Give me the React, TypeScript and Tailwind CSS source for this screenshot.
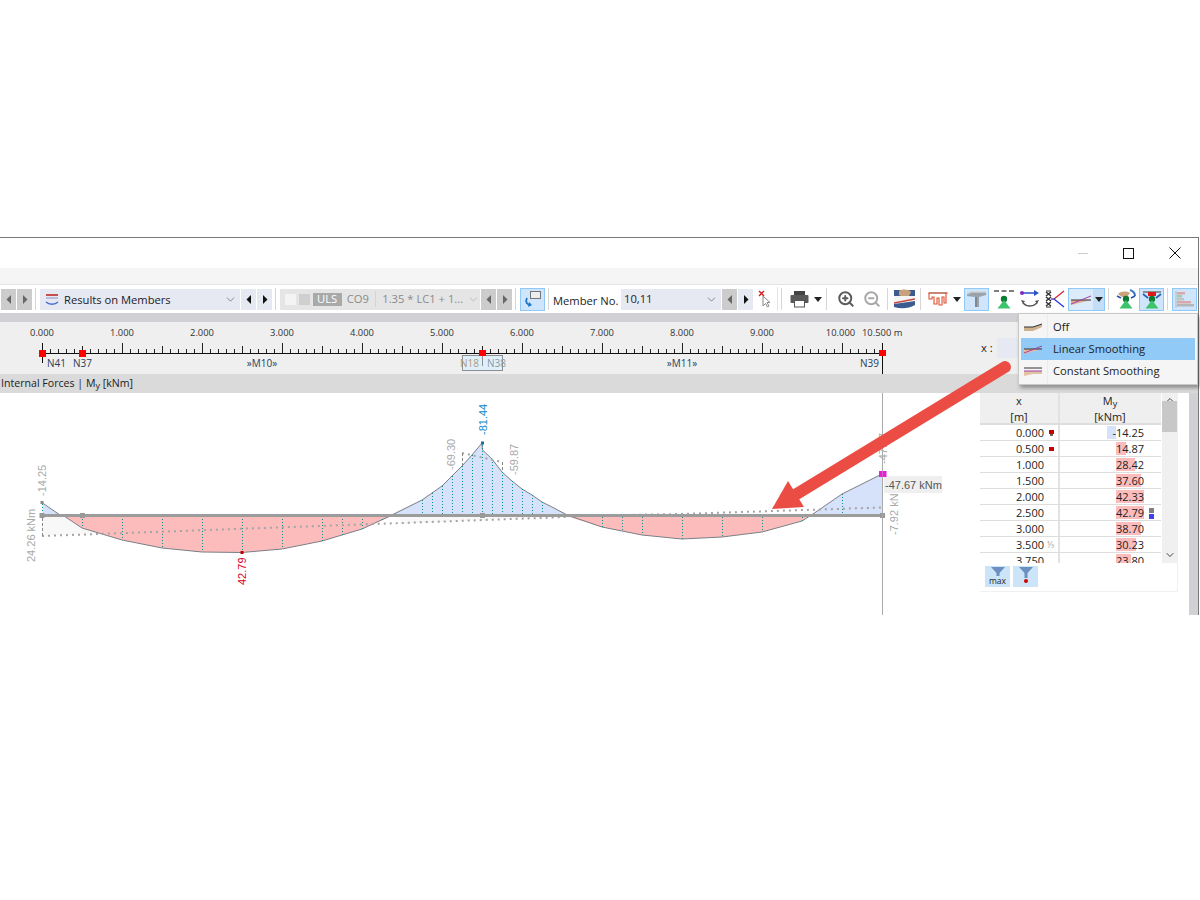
import { ChevronDown, ZoomIn, ZoomOut, ChevronUp } from "lucide-react";

const uiFont = { fontFamily: '"Open Sans", "Noto Sans", sans-serif' };

function Sep() {
    return <div className="ml-[3px] mr-[4px] h-[22px] w-px shrink-0 bg-[#d6d6d6]" />;
}

function Arrow({ dir, dark, className }: { dir: "l" | "r"; dark?: boolean; className: string }) {
    return (
        <div className={"flex h-[21px] w-[15px] shrink-0 items-center justify-center " + className}>
            <svg width="6" height="9" viewBox="0 0 6 9">
                <path d={dir === "l" ? "M5 0v9L0.5 4.5z" : "M1 0v9l4.5-4.5z"} fill={dark ? "#111" : "#666"} />
            </svg>
        </div>
    );
}

function ToolBtn({ w = 25, on, children, className = "" }: { w?: number; on?: boolean; children: React.ReactNode; className?: string }) {
    return (
        <div
            style={{ width: w }}
            className={
                "flex h-[23px] shrink-0 items-center justify-center " +
                (on ? "border border-[#90c8f6] bg-[#cfe5fb] " : "") +
                className
            }
        >
            {children}
        </div>
    );
}

function Caret() {
    return (
        <svg width="8" height="5" viewBox="0 0 8 5" className="shrink-0">
            <path d="M0 0h8L4 5z" fill="#222" />
        </svg>
    );
}

function SmoothIcon({ mode }: { mode: "off" | "linear" | "constant" }) {
    return (
        <svg width="18" height="12" viewBox="0 0 18 12">
            {mode === "off" && <path d="M0 6h9l9-3v3L9 10H0z" fill="#cdb38f" />}
            {mode === "off" && <path d="M0 6h9l9-3" stroke="#333" fill="none" />}
            {mode === "linear" && <path d="M0 6h18L0 11z" fill="#e9b9a0" />}
            {mode === "linear" && <path d="M0 6h18" stroke="#333" fill="none" />}
            {mode === "linear" && <path d="M0 10L18 3" stroke="#a13fa8" fill="none" />}
            {mode === "constant" && <path d="M0 6h18v3H9L0 11z" fill="#e3c3a5" />}
            {mode === "constant" && <path d="M0 3h18" stroke="#333" fill="none" />}
            {mode === "constant" && <path d="M0 6h18" stroke="#a13fa8" fill="none" />}
        </svg>
    );
}

function Support() {
    return (
        <g>
            <circle cx="10" cy="10" r="3.2" fill="#0e7a35" />
            <path d="M10 11L3.5 19.5h13z" fill="#3cc46a" />
        </g>
    );
}

function Toolbar() {
    return (
        <div className="flex h-[28px] items-center bg-white pl-px text-[11.2px] text-[#222]">
            <Arrow dir="l" className="bg-[#cccccc]" />
            <Arrow dir="r" className="ml-px bg-[#cccccc]" />
            <Sep />
            <div className="flex h-[21px] w-[200px] shrink-0 items-center bg-[#e6e8f2] pl-[5px] pr-[3px]">
                <svg width="14" height="12" viewBox="0 0 14 12" className="shrink-0">
                    <path d="M1 2h12" stroke="#c94f4f" strokeWidth="2" />
                    <path d="M1 5h12" stroke="#8b93c9" strokeWidth="1" />
                    <path d="M1 9c3 3 9 3 12 0" stroke="#4a6fd0" strokeWidth="1.5" fill="none" />
                </svg>
                <span className="ml-[5px] flex-1 translate-y-px">Results on Members</span>
                <ChevronDown size={13} strokeWidth={1.2} color="#555" />
            </div>
            <Arrow dir="l" dark className="ml-px bg-[#e6e8f2]" />
            <Arrow dir="r" dark className="ml-px bg-[#e6e8f2]" />
            <Sep />
            <div className="flex h-[21px] w-[200px] shrink-0 items-center bg-[#e5e5e5] pl-[5px] text-[#8a8a8a]">
                <div className="h-[11px] w-[11px] bg-[#f4f4f4]" />
                <div className="ml-[3px] h-[11px] w-[11px] bg-[#cfcfcf]" />
                <div className="ml-[3px] flex h-[13px] w-[30px] items-center justify-center bg-[#a9a9a9] text-white">ULS</div>
                <span className="ml-[5px] w-[24px]">CO9</span>
                <div className="ml-[5px] h-[16px] w-px bg-[#d4d4d4]" />
                <span className="ml-[6px] w-[80px] whitespace-nowrap">1.35 * LC1 + 1...</span>
                <ChevronDown size={13} strokeWidth={1.2} color="#aaa" className="ml-[5px]" />
            </div>
            <Arrow dir="l" className="ml-px bg-[#cccccc]" />
            <Arrow dir="r" className="ml-px bg-[#cccccc]" />
            <Sep />
            <ToolBtn on>
                <svg width="18" height="18" viewBox="0 0 18 18">
                    <rect x="6.5" y="1.5" width="10" height="7" fill="#eee" stroke="#777" />
                    <path d="M3 8c-2 4 0 7 4 7" stroke="#1e78c8" strokeWidth="1.8" fill="none" />
                    <path d="M5 12l3 3-4 2z" fill="#1e78c8" />
                </svg>
            </ToolBtn>
            <Sep />
            <span className="w-[68px] shrink-0 translate-y-[2px] whitespace-nowrap">Member No.</span>
            <div className="flex h-[21px] w-[100px] shrink-0 items-center bg-[#e6e8f2] pl-[3px] pr-[3px]">
                <span className="flex-1">10,11</span>
                <ChevronDown size={13} strokeWidth={1.2} color="#555" />
            </div>
            <Arrow dir="l" className="ml-px bg-[#cccccc]" />
            <Arrow dir="r" dark className="ml-px bg-[#e6e8f2]" />
            <div className="flex h-[24px] w-[25px] shrink-0 items-center justify-center border-r border-[#e4e4e4]">
                <svg width="16" height="18" viewBox="0 0 16 18">
                    <path d="M2 1l5 5M7 1L2 6" stroke="#d81b1b" strokeWidth="1.4" />
                    <path d="M6 6v10l2.5-2.5 2 3.5 1.5-1-2-3.5H13z" fill="#fff" stroke="#888" />
                </svg>
            </div>
            <Sep />
            <div className="flex h-[23px] w-[37px] shrink-0 items-center gap-[5px] pl-[4px]">
                <svg width="19" height="18" viewBox="0 0 19 18" className="shrink-0">
                    <path d="M4 1h11v4H4z" fill="#444" />
                    <rect x="0.5" y="5" width="18" height="8" rx="1" fill="#5a5a5a" />
                    <rect x="4.5" y="10.5" width="10" height="6.5" fill="#fff" stroke="#555" />
                </svg>
                <Caret />
            </div>
            <Sep />
            <div className="flex h-[23px] w-[53px] shrink-0 items-center gap-[8px] pl-[6px]">
                <ZoomIn size={18} strokeWidth={2.6} color="#5c5c5c" />
                <ZoomOut size={18} strokeWidth={2.6} color="#a8a8a8" />
            </div>
            <Sep />
            <ToolBtn w={26} className="-ml-px">
                <svg width="21" height="21" viewBox="0 0 21 21">
                    <path d="M0 1h21v6H0z" fill="#3c5c90" />
                    <path d="M5 2c4-2 9-2 12 1l-2 4-6 1-4-2z" fill="#c9a27b" />
                    <path d="M0 7h21v4L0 15z" fill="#f4f4f4" />
                    <path d="M0 14l21-4" stroke="#c9463d" strokeWidth="1.5" />
                    <path d="M0 15l21-3v4c-7 4-14 4-21 2z" fill="#3c5c90" />
                </svg>
            </ToolBtn>
            <Sep />
            <div className="flex h-[23px] w-[37px] shrink-0 items-center gap-[5px] pl-[3px]">
                <svg width="20" height="16" viewBox="0 0 20 16" className="shrink-0">
                    <path d="M0.5 2h19" stroke="#a5341c" strokeWidth="1.2" />
                    <path d="M1 2v6h3V6h2v7h3V7h2v7h3V6h2v6h2V2" stroke="#e0502c" strokeWidth="1.1" fill="none" />
                </svg>
                <Caret />
            </div>
            <ToolBtn on className="ml-[2px]">
                <svg width="21" height="17" viewBox="0 0 21 17">
                    <path d="M1 3l4-2h15v3l-7 2v10H9V6L1 5z" fill="#9aa3ab" />
                    <path d="M1 3l4-2h15" stroke="#ccd1d5" strokeWidth="1.5" fill="none" />
                    <path d="M9 6h2v10H9z" fill="#80898f" />
                </svg>
            </ToolBtn>
            <ToolBtn w={27} className="ml-px">
                <svg width="20" height="20" viewBox="0 0 20 20">
                    <path d="M0 2h5M7.5 2h5M15 2h5" stroke="#555" strokeWidth="1.6" />
                    <Support />
                </svg>
            </ToolBtn>
            <ToolBtn w={25}>
                <svg width="20" height="20" viewBox="0 0 20 20">
                    <circle cx="2" cy="4" r="2" fill="#7d2bc4" />
                    <path d="M3 4h14" stroke="#2a52c9" strokeWidth="1.5" />
                    <path d="M14 1l5 3-5 3z" fill="#2a52c9" />
                    <path d="M3 14c4 4 10 4 14 0" stroke="#555" strokeWidth="1.4" fill="none" />
                    <path d="M1 11l4 1-2 3zM19 11l-4 1 2 3z" fill="#555" />
                </svg>
            </ToolBtn>
            <ToolBtn w={25}>
                <svg width="20" height="20" viewBox="0 0 20 20">
                    <path d="M1 2h5M1 18h5" stroke="#333" strokeWidth="1" />
                    <path d="M1 3l5 4M6 3L1 7M1 8l5 4M6 8l-5 4M1 13l5 4M6 13l-5 4" stroke="#333" strokeWidth="1.5" />
                    <path d="M9 10L19 2" stroke="#d8232a" strokeWidth="1.3" />
                    <path d="M9 10l10 8" stroke="#2431dc" strokeWidth="1.3" />
                    <path d="M6 10h3" stroke="#2431dc" strokeWidth="1.3" />
                </svg>
            </ToolBtn>
            <div className="ml-px flex h-[23px] w-[37px] shrink-0 border border-[#90c8f6] bg-[#dcebf9]">
                <div className="flex w-[24px] items-center justify-center">
                    <svg width="20" height="12" viewBox="0 0 20 12">
                        <path d="M0 7h20L0 12z" fill="#e2ad95" />
                        <path d="M0 7h20" stroke="#333" fill="none" />
                        <path d="M0 11L20 3" stroke="#a13fa8" fill="none" />
                    </svg>
                </div>
                <div className="flex flex-1 items-center justify-center bg-[#c4def7]">
                    <Caret />
                </div>
            </div>
            <Sep />
            <ToolBtn w={25}>
                <svg width="20" height="20" viewBox="0 0 20 20">
                    <path d="M14 1c3 1 5 3 5 6" stroke="#3b78c8" strokeWidth="2" fill="none" />
                    <path d="M2 5c3-3 9-3 12-1l-3 4H6z" fill="#c9a27b" />
                    <path d="M1 7l4 2M19 7l-4 2" stroke="#2a52a9" strokeWidth="1.5" />
                    <Support />
                </svg>
            </ToolBtn>
            <ToolBtn on className="ml-px">
                <svg width="20" height="20" viewBox="0 0 20 20">
                    <path d="M1 3h18" stroke="#555" strokeWidth="1.2" />
                    <rect x="6" y="3" width="8" height="4" fill="#e01818" />
                    <path d="M1 5l5 4M19 5l-5 4" stroke="#2a62b9" strokeWidth="1.8" />
                    <Support />
                </svg>
            </ToolBtn>
            <Sep />
            <ToolBtn on>
                <svg width="20" height="19" viewBox="0 0 20 19">
                    <path d="M1 1v17" stroke="#b8b8b8" />
                    <rect x="2" y="2" width="8" height="2.5" fill="#dba8a8" />
                    <rect x="2" y="5" width="5" height="2.5" fill="#9bd0a9" />
                    <rect x="2" y="8" width="7" height="2.5" fill="#bfc4c8" />
                    <rect x="2" y="11" width="14" height="2.5" fill="#dba8a8" />
                    <rect x="2" y="14" width="17" height="2.5" fill="#b3b7ba" />
                </svg>
            </ToolBtn>
        </div>
    );
}

const members = Array.from({ length: 106 }, (_, i) => i);
const majors = [0, 1, 2, 3, 4, 5, 6, 7, 8, 9, 10];

function Ruler() {
    const px = (m: number) => 42.5 + 80 * m;
    return (
        <svg viewBox="0 0 980 52" className="block h-[52px] w-[980px] shrink-0" style={uiFont}>
            {members.map((i) => {
                const x = 42.5 + 8 * i;
                const h = i % 10 === 0 ? 10 : i % 5 === 0 ? 7 : 4;
                return <path key={i} d={`M${x} ${31 - h}V31`} stroke="#222" />;
            })}
            <path d="M42 31.5H882" stroke="#111" />
            <path d="M42.5 21V41" stroke="#111" />
            {majors.map((m) => (
                <text key={m} x={m === 10 ? px(m) - 2 : px(m) - 0.5} y="14" textAnchor="middle" fontSize="9.4" fill="#333">
                    {m.toFixed(3)}
                </text>
            ))}
            <text x="862" y="14" fontSize="9.4" fill="#333">10.500 m</text>
            <rect x="462.5" y="33.5" width="40" height="15" fill="#dff0fa" stroke="#8a8f92" />
            <text x="47" y="45" fontSize="10" fill="#2b3d5a">N41</text>
            <text x="73" y="45" fontSize="10" fill="#2b3d5a">N37</text>
            <text x="262" y="45" fontSize="10" textAnchor="middle" fill="#2b3d5a">»M10»</text>
            <text x="460" y="45" fontSize="10" fill="#b09a7a">N18</text>
            <text x="487" y="45" fontSize="10" fill="#8a9aa8">N38</text>
            <text x="682" y="45" fontSize="10" textAnchor="middle" fill="#2b3d5a">»M11»</text>
            <text x="860" y="45" fontSize="10" fill="#2b3d5a">N39</text>
            <path d="M482.5 32V44" stroke="#8a8f92" />
            <path d="M882.5 21V52" stroke="#111" />
            <rect x="39" y="28" width="7" height="7" fill="#f00" />
            <rect x="79" y="28" width="7" height="7" fill="#f00" />
            <rect x="479" y="28" width="7" height="6" fill="#f00" />
            <rect x="879" y="28" width="7" height="6" fill="#f00" />
        </svg>
    );
}

const tealLines: [number, number, number][] = [
    [42, 504, 515], [82, 516, 528], [122, 516, 540], [162, 516, 548], [202, 516, 552], [242, 516, 552], [282, 516, 549],
    [322, 516, 541], [342, 516, 536], [362, 516, 529], [382, 516, 520],
    [422, 500, 514], [432, 493, 514], [442, 486, 514], [452, 476, 514], [462, 466, 514], [472, 455, 514], [482, 445, 514],
    [492, 459, 514], [502, 472, 514], [512, 481, 514], [522, 489, 514], [532, 495, 514], [542, 502, 514],
    [602, 517, 527], [622, 517, 531], [642, 517, 535], [682, 517, 539], [722, 517, 537], [762, 517, 532], [802, 517, 521],
    [842, 494, 514],
];

function rotated(x: number, y: number, text: string, fill: string, size = 11) {
    return (
        <text x={x} y={y} transform={`rotate(-90 ${x} ${y})`} fontSize={size} fill={fill} fontFamily='"Liberation Sans", sans-serif'>
            {text}
        </text>
    );
}

function Chart() {
    return (
        <svg viewBox="0 393 980 222" className="block h-[222px] w-[980px] shrink-0">
            <path d="M42 516H400L42 536z" fill="#f8f8f8" />
            <path d="M400 516H567L400 524z" fill="#f8f8f8" />
            <path d="M42.5 503L60 515H42.5z" fill="#d6e2fa" />
            <path d="M64 516L82 528L122 540L162 548L202 552L242 552.5L282 549L322 541L362 529L392 516z" fill="#fdbcbc" />
            <path d="M392 514L422 500L432 493L442 486L452 476L462 466L472 455L482 443L482.5 450L492 459L502 472L512 481L522 489L532 495L542 502L552 507L567 514z" fill="#d6e2fa" />
            <path d="M569 517L602 527L622 531L642 535L682 539L722 537L762 532L802 521L808 517z" fill="#fdbcbc" />
            <path d="M813 514L842 494L882 474V514z" fill="#d6e2fa" />
            <path d="M42.5 503L60 515M64 516L82 528L122 540L162 548L202 552L242 552.5L282 549L322 541L362 529L392 515L422 500L432 493L442 486L452 476L462 466L472 455L482 443L482.5 450L492 459L502 472L512 481L522 489L532 495L542 502L552 507L567 515L602 527L622 531L642 535L682 539L722 537L762 532L802 521L813 514L842 494L882 474" fill="none" stroke="#7b7f86" />
            {tealLines.map(([x, a, b]) => (
                <path key={x} d={`M${x + 0.5} ${a}V${b}`} stroke="#0f8f8f" strokeDasharray="1 2" />
            ))}
            <path d="M882.5 476V514" stroke="#888" strokeDasharray="1 2" />
            <path d="M42 536L567 517" stroke="#a4a4a4" strokeWidth="2" strokeDasharray="2 4" fill="none" />
            <path d="M567 516L680 514L882 507.5" stroke="#a4a4a4" strokeWidth="2" strokeDasharray="2 4" fill="none" />
            <path d="M462 453L502 462" stroke="#a4a4a4" strokeWidth="2" strokeDasharray="2 4" fill="none" />
            <path d="M42.5 518V536M462.5 453V466M502.5 462V472" stroke="#888" strokeDasharray="3 2" fill="none" />
            <path d="M42 515.5H882" stroke="#9c9c9c" strokeWidth="3" />
            <rect x="39.5" y="513" width="5" height="5" fill="#999" />
            <rect x="80" y="513" width="5" height="5" fill="#999" />
            <rect x="480" y="513" width="5" height="5" fill="#999" />
            <rect x="880" y="513" width="5" height="5" fill="#999" />
            <rect x="40.5" y="501" width="3" height="3" fill="#888" />
            <rect x="481" y="441.5" width="3" height="3" fill="#166e9e" />
            <rect x="240.5" y="551" width="3" height="3" fill="#c00000" />
            {rotated(46, 496, "-14.25", "#a9a9a9")}
            {rotated(35, 562, "24.26 kNm", "#a9a9a9")}
            {rotated(246, 585, "42.79", "#e0001b")}
            {rotated(486.5, 435, "-81.44", "#1088c8")}
            {rotated(455, 470, "-69.30", "#a9a9a9")}
            {rotated(518, 475, "-59.87", "#a9a9a9")}
            {rotated(887, 464, "-47.67", "#a9a9a9")}
            {rotated(898, 535, "-7.92 kNm", "#a9a9a9")}
            <path d="M882.5 393V615" stroke="#aaaaaa" />
            <rect x="884" y="476" width="58" height="17" fill="#efefef" />
            <text x="885" y="489" fontSize="11" fill="#555" fontFamily='"Liberation Sans", sans-serif'>-47.67 kNm</text>
            <rect x="879" y="471" width="3.5" height="6" fill="#e81fd6" />
            <rect x="883" y="471" width="3.5" height="6" fill="#e81fd6" />
        </svg>
    );
}

const rows: { x: string; my: string; w: number; neg?: boolean; mark?: "down" | "sq" | "frac"; ext?: boolean }[] = [
    { x: "0.000", my: "-14.25", w: 9, neg: true, mark: "down" },
    { x: "0.500", my: "14.87", w: 10, mark: "sq" },
    { x: "1.000", my: "28.42", w: 19 },
    { x: "1.500", my: "37.60", w: 25 },
    { x: "2.000", my: "42.33", w: 28 },
    { x: "2.500", my: "42.79", w: 28, ext: true },
    { x: "3.000", my: "38.70", w: 25 },
    { x: "3.500", my: "30.23", w: 20, mark: "frac" },
    { x: "3.750", my: "23.80", w: 15 },
];

function ResultTable() {
    return (
        <div className="flex h-[222px] w-[209px] shrink-0 flex-col bg-white text-[11px] text-[#222]" style={uiFont}>
            <div className="flex h-[170px] w-[198px] overflow-hidden">
                <div className="w-[181px] shrink-0 overflow-hidden">
                    <div className="flex h-[32px] border-b-2 border-[#ddd] bg-[#efefef] text-center leading-[16px]">
                        <div className="w-[80px] border-r-2 border-[#e2e2e2]">x<br />[m]</div>
                        <div className="w-[100px]">M<sub className="text-[9px] leading-none">y</sub><br />[kNm]</div>
                    </div>
                    {rows.map((r) => (
                        <div key={r.x} className="flex h-[16px] border-b border-[#ddd] leading-[16px]">
                            <div className="flex w-[80px] border-r-2 border-[#e2e2e2]">
                                <span className="w-[64px] text-right">{r.x}</span>
                                <span className="flex flex-1 flex-col justify-center pl-[5px]">
                                    {(r.mark === "down" || r.mark === "sq") && <span className="h-[4px] w-[5px] bg-[#c90000]" />}
                                    {r.mark === "down" && <span className="ml-[1px] h-[2px] w-[3px] bg-[#666]" />}
                                    {r.mark === "frac" && <span className="-ml-[2px] text-[9px] text-[#aaa]">⅓</span>}
                                </span>
                            </div>
                            <div className="relative flex w-[100px]">
                                {r.neg ? (
                                    <div className="absolute left-[47px] top-[1px] h-[13px] bg-[#d6e2fa]" style={{ width: r.w }} />
                                ) : (
                                    <div className="absolute left-[56px] top-[1px] h-[13px] bg-[#fdbcbc]" style={{ width: r.w }} />
                                )}
                                <span className="relative w-[84px] text-right">{r.my}</span>
                                {r.ext && (
                                    <span className="relative ml-[5px] flex flex-col gap-[1px] pt-[3px]">
                                        <span className="h-[5px] w-[5px] bg-[#808080]" />
                                        <span className="h-[5px] w-[5px] bg-[#4040f0]" />
                                    </span>
                                )}
                            </div>
                        </div>
                    ))}
                </div>
                <div className="relative ml-px w-[16px] shrink-0 bg-[#f0f0f0]">
                    <ChevronUp size={12} strokeWidth={2} color="#444" className="absolute left-[2px] top-px" />
                    <div className="absolute left-0 top-[8px] h-[31px] w-[15px] bg-[#c8c8c8]" />
                    <ChevronDown size={12} strokeWidth={2} color="#444" className="absolute bottom-[2px] left-[2px]" />
                </div>
            </div>
            <div className="flex h-[29px] w-[198px] gap-[3px] border-b border-r border-[#f0f0f0] pl-[5px] pt-[3px]">
                <div className="flex h-[21px] w-[25px] flex-col items-center bg-[#cce4f7]">
                    <svg width="14" height="10" viewBox="0 0 14 10"><path d="M0 1h14L8.5 7v3h-3V7z" fill="#6a8fc0" /></svg>
                    <span className="text-[8.5px] leading-[9px]">max</span>
                </div>
                <div className="flex h-[21px] w-[25px] flex-col items-center bg-[#cce4f7]">
                    <svg width="14" height="12" viewBox="0 0 14 12"><path d="M0 1h14L8.5 7v5h-3V7z" fill="#6a8fc0" /></svg>
                    <span className="mt-px h-[4px] w-[4px] rounded-full bg-[#d00000]" />
                </div>
            </div>
        </div>
    );
}

export default function App() {
    return (
        <div className="h-[900px] w-[1200px] overflow-hidden bg-white pt-[237px]" style={uiFont}>
            <div className="relative w-[1199px] border-r border-t border-[#777]">
                <div className="flex h-[30px] items-center justify-end bg-white">
                    <div className="mr-[35px] h-px w-[10px] bg-[#cccccc]" />
                    <div className="mr-[35px] h-[11px] w-[11px] border border-[#111]" />
                    <svg width="12" height="12" viewBox="0 0 12 12" className="mr-[17px]">
                        <path d="M0.5 0.5L11.5 11.5M11.5 0.5L0.5 11.5" stroke="#111" />
                    </svg>
                </div>
                <div className="h-[17px] border-b border-[#e4e4e4] bg-[#f5f5f5]" />
                <Toolbar />
                <div className="h-[9px] bg-[#d0d0d5]" />
                <div className="flex h-[52px] bg-[#efefef]">
                    <Ruler />
                    <div className="flex items-center pl-px text-[11.2px] text-[#222]">
                        <span className="w-[16px]">x :</span>
                        <div className="h-[20px] w-[30px] bg-[#e6e8f2]" />
                    </div>
                </div>
                <div className="flex h-[19px] items-center bg-[#dadada] pl-px text-[10.6px] text-[#222]">
                    Internal Forces | M<sub className="text-[9px] leading-none">y</sub>&nbsp;[kNm]
                </div>
                <div className="flex">
                    <Chart />
                    <ResultTable />
                    <div className="flex-1 bg-[#d0d0d5]" />
                </div>

                <div className="absolute left-[1018px] top-[75px] w-[180px] border border-[#c8c8c8] bg-[#f5f5f5] py-[2px] pr-[2px] pl-[2px] text-[11.2px] text-[#222] shadow-[2px_3px_4px_rgba(0,0,0,0.35)]">
                    <div className="absolute bottom-0 left-[28px] top-0 w-px bg-[#ececec]" />
                    {(["off", "linear", "constant"] as const).map((m, i) => (
                        <div key={m} className={"relative flex h-[22px] items-center pl-[3px] " + (m === "linear" ? "bg-[#91c9f7]" : "")}>
                            <span className="w-[29px]"><SmoothIcon mode={m} /></span>
                            {["Off", "Linear Smoothing", "Constant Smoothing"][i]}
                        </div>
                    ))}
                </div>

                <svg viewBox="760 350 260 170" className="absolute left-[760px] top-[113px] h-[170px] w-[260px]">
                    <path d="M1005 366L795 494" stroke="#eb4d45" strokeWidth="12" strokeLinecap="round" />
                    <path d="M772 508L788 480L804 506z" fill="#eb4d45" />
                </svg>
            </div>
        </div>
    );
}
